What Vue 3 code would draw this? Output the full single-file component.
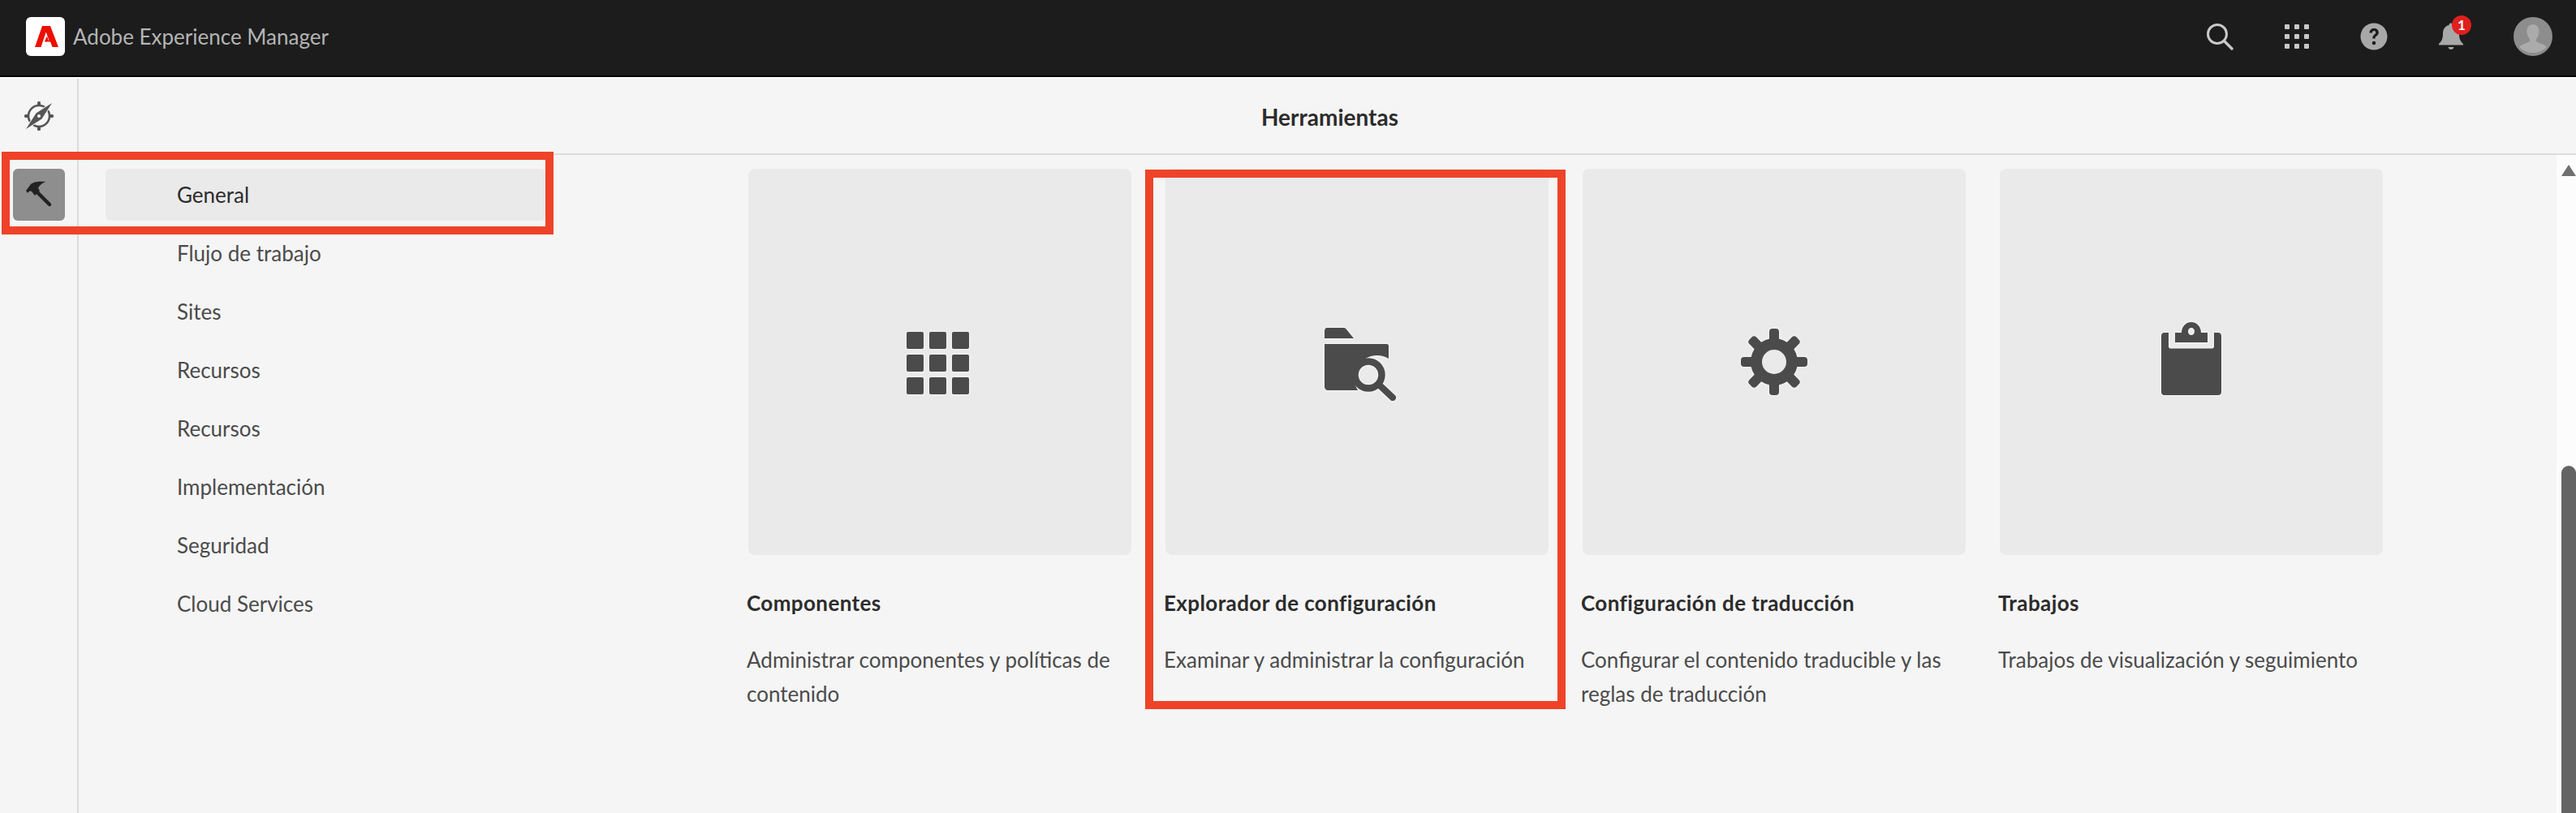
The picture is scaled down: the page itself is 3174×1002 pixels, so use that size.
<script setup>
const navItems = ['General', 'Flujo de trabajo', 'Sites', 'Recursos', 'Recursos', 'Implementación', 'Seguridad', 'Cloud Services']

const cards = [
  { id: 'grid', title: 'Componentes', desc: 'Administrar componentes y políticas de contenido' },
  { id: 'folder', title: 'Explorador de configuración', desc: 'Examinar y administrar la configuración' },
  { id: 'gear', title: 'Configuración de traducción', desc: 'Configurar el contenido traducible y las reglas de traducción' },
  { id: 'clipboard', title: 'Trabajos', desc: 'Trabajos de visualización y seguimiento' }
]

const gridTiles = []
for (let r = 0; r < 3; r++) {
  for (let c = 0; c < 3; c++) gridTiles.push({ x: c * 28, y: r * 28 })
}
const gearTeeth = [0, 45, 90, 135, 180, 225, 270, 315]
const dots = []
for (let r = 0; r < 3; r++) {
  for (let c = 0; c < 3; c++) dots.push({ x: c * 12, y: r * 12 })
}
</script>

<template>
  <div class="page">
    <header class="topbar">
      <div class="brand">
        <svg class="logo" viewBox="0 0 48 48" width="48" height="48">
          <rect width="48" height="48" rx="6" fill="#fff" />
          <path d="M20 11h10l10 26h-7.500l-2.400-6.500h-7.300l3-7 2.200 5.500h.6l-3.900-10.500L18.500 37H11z" fill="#eb1000" />
        </svg>
        <span class="brand-name">Adobe Experience Manager</span>
      </div>
      <div class="actions">
        <svg class="act" viewBox="0 0 34 34" width="34" height="34">
          <circle cx="14" cy="14" r="11.500" fill="none" stroke="#c8c8c8" stroke-width="3" />
          <path d="M22.500 22.500L32 32" stroke="#c8c8c8" stroke-width="3.400" stroke-linecap="round" />
        </svg>
        <svg class="act" viewBox="0 0 32 32" width="32" height="32">
          <rect v-for="(d, i) in dots" :key="i" :x="d.x + 1" :y="d.y + 1" width="6" height="6" rx="1" fill="#c8c8c8" />
        </svg>
        <svg class="act" viewBox="0 0 34 34" width="34" height="34">
          <circle cx="17" cy="17" r="16.500" fill="#a8a8a8" />
          <path d="M11.500 12.500c0-3.500 2.500-5.500 5.700-5.500 3.300 0 5.600 2 5.600 5 0 2.600-1.500 3.700-3 4.800-1 .8-1.200 1.300-1.200 2.700h-3.300c0-2.400.6-3.500 2-4.600 1.300-1 2-1.600 2-2.800 0-1.200-.9-2-2.100-2-1.300 0-2.200.9-2.300 2.400z" fill="#1c1c1c" />
          <circle cx="17" cy="25" r="2.300" fill="#1c1c1c" />
        </svg>
        <div class="bell">
          <svg viewBox="0 0 32 36" width="32" height="36">
            <path d="M16 1.500c1.500 0 2.500 1 2.500 2.500 5 1.200 7.500 5 7.500 10.500 0 6 1.500 9.500 5 12.500v1.500H1V27c3.500-3 5-6.500 5-12.500C6 9 8.500 5.200 13.500 4c0-1.500 1-2.500 2.500-2.500z" fill="#a8a8a8" />
            <path d="M12.500 31h7c-.4 2-1.800 3-3.500 3s-3.100-1-3.500-3z" fill="#a8a8a8" />
          </svg>
          <span class="badge">1</span>
        </div>
        <svg class="avatar" viewBox="0 0 48 48" width="48" height="48">
          <circle cx="24" cy="24" r="24" fill="#8d8d8d" />
          <path d="M24 9c5 0 7.500 4 7.500 8.500 0 4-1.500 7.500-3.500 9.500v3c3 2 10 3.500 13 7a24 24 0 0 1-34 0c3-3.500 10-5 13-7v-3c-2-2-3.500-5.500-3.500-9.500C16.500 13 19 9 24 9z" fill="#ababab" />
        </svg>
      </div>
    </header>

    <div class="shell">
      <aside class="rail">
        <div class="rail-item">
          <svg viewBox="0 0 38 38" width="38" height="38">
            <circle cx="19" cy="19" r="13" fill="none" stroke="#555" stroke-width="2.600" />
            <g fill="#555">
              <rect x="17" y="1" width="4" height="6" rx="1.500" />
              <rect x="17" y="31" width="4" height="6" rx="1.500" />
              <rect x="1" y="17" width="6" height="4" rx="1.500" />
              <rect x="31" y="17" width="6" height="4" rx="1.500" />
            </g>
            <path d="M35 3L22.500 22.500 15.500 15.500zM3 35L15.500 15.500 22.500 22.500z" fill="#555" stroke="#f5f5f5" stroke-width="2" paint-order="stroke" />
            <circle cx="19" cy="19" r="2" fill="#f5f5f5" />
          </svg>
        </div>
        <div class="rail-item rail-item--active">
          <svg viewBox="0 0 34 34" width="34" height="34">
            <path d="M1 12L7 4C10 1 18 0 25 1C20 3 17 6 16 9L18 12L12 18L8 13C6 12 4 13 3 15z" fill="#222" />
            <path d="M15 14L30 29" stroke="#222" stroke-width="4.500" stroke-linecap="round" />
          </svg>
        </div>
      </aside>

      <div class="main">
        <div class="heading">Herramientas</div>
        <div class="body">
          <nav class="nav">
            <a v-for="(item, i) in navItems" :key="i" class="nav-item" :class="{ 'nav-item--active': i === 0 }">{{ item }}</a>
          </nav>
          <section class="cards">
            <article v-for="card in cards" :key="card.id" class="card">
              <div class="tile">
                <svg v-if="card.id === 'grid'" class="tile-icon icon-grid" viewBox="0 0 77 77" width="77" height="77">
                  <rect v-for="(t, i) in gridTiles" :key="i" :x="t.x" :y="t.y" width="21" height="21" rx="2" fill="#4b4b4b" />
                </svg>
                <svg v-else-if="card.id === 'folder'" class="tile-icon icon-folder" viewBox="0 0 90 90" width="90" height="90">
                  <path d="M0 4c0-2 1-4 3-4h20c2 0 3 .5 4 2l9 11H0z" fill="#4b4b4b" />
                  <path d="M0 20h77c1 0 2 1 2 2v16a28 28 0 0 0-38 39H4c-2 0-4-2-4-4z" fill="#4b4b4b" />
                  <circle cx="54" cy="58" r="16.500" fill="none" stroke="#4b4b4b" stroke-width="8.500" />
                  <path d="M67 70l17 16" stroke="#4b4b4b" stroke-width="8" stroke-linecap="round" />
                </svg>
                <svg v-else-if="card.id === 'gear'" class="tile-icon" viewBox="0 0 82 82" width="82" height="82">
                  <rect v-for="a in gearTeeth" :key="a" x="35" y="0" width="12" height="18" rx="4" fill="#4b4b4b" :transform="`rotate(${a} 41 41)`" />
                  <circle cx="41" cy="41" r="29" fill="#4b4b4b" />
                  <circle cx="41" cy="41" r="15" fill="#eaeaea" />
                </svg>
                <svg v-else class="tile-icon icon-clip" viewBox="0 0 74 90" width="74" height="90">
                  <path d="M0 17c0-2.500 1.500-4 4-4h5v17c0 1.500 1 2.500 2.500 2.500h51c1.500 0 2.500-1 2.500-2.500V13h5c2.500 0 4 1.500 4 4v69c0 2.500-1.500 4-4 4H4c-2.500 0-4-1.500-4-4z" fill="#4b4b4b" />
                  <path d="M17 13h8c0-7 5-13 12-13s12 6 12 13h8v12H17zM37 7a4 4.500 0 1 0 0 9 4 4.500 0 1 0 0-9z" fill="#4b4b4b" fill-rule="evenodd" />
                </svg>
              </div>
              <h3 class="card-title">{{ card.title }}</h3>
              <p class="card-desc">{{ card.desc }}</p>
            </article>
          </section>
          <div class="scrollbar">
            <span class="scroll-arrow"></span>
            <span class="scroll-thumb"></span>
          </div>
        </div>
      </div>
    </div>

    <div class="mark mark--nav"></div>
    <div class="mark mark--card"></div>
  </div>
</template>

<style scoped>
.page {
  position: relative;
  display: flex;
  flex-direction: column;
  width: 3174px;
  height: 1002px;
  overflow: hidden;
  background: #f5f5f5;
  font-family: Lato, "Open Sans", sans-serif;
  color: #4b4b4b;
}

.topbar {
  display: flex;
  justify-content: space-between;
  align-items: center;
  flex: none;
  height: 95px;
  padding: 0 29px 3px 32px;
  box-sizing: border-box;
  background: #1c1c1c;
  border-bottom: 2px solid #000;
}

.brand {
  display: flex;
  align-items: center;
  gap: 10px;
}

.logo {
  display: block;
}

.brand-name {
  font-size: 26px;
  color: #b4b4b4;
}

.actions {
  display: flex;
  align-items: center;
  gap: 62px;
}

.act {
  display: block;
}

.bell {
  position: relative;
  width: 32px;
  height: 36px;
  margin-right: -1px;
}

.bell svg {
  display: block;
}

.badge {
  position: absolute;
  top: -8px;
  left: 17px;
  width: 24px;
  height: 24px;
  border-radius: 50%;
  background: #e01f1f;
  color: #fff;
  font-size: 17px;
  font-weight: 700;
  line-height: 24px;
  text-align: center;
}

.avatar {
  display: block;
}

.shell {
  display: flex;
  flex: 1;
  min-height: 0;
  border-top: 2px solid #fff;
}

.rail {
  flex: none;
  width: 97px;
  box-sizing: border-box;
  padding: 0 16px;
  border-right: 2px solid #dcdcdc;
}

.rail-item {
  display: flex;
  align-items: center;
  justify-content: center;
  width: 64px;
  height: 64px;
  margin-top: 14px;
  border-radius: 6px;
}

.rail-item--active {
  margin-top: 33px;
  background: #8e8e8e;
}

.main {
  display: flex;
  flex: 1;
  flex-direction: column;
  min-width: 0;
}

.heading {
  flex: none;
  height: 94px;
  padding: 1px 0 0 6px;
  line-height: 92px;
  box-sizing: border-box;
  border-bottom: 2px solid #dcdcdc;
  text-align: center;
  font-size: 28px;
  font-weight: 700;
  color: #2c2c2c;
}

.body {
  display: flex;
  flex: 1;
  min-height: 0;
}

.nav {
  display: flex;
  flex: none;
  flex-direction: column;
  width: 825px;
  box-sizing: border-box;
  padding: 17px 0 0 33px;
}

.nav-item {
  display: block;
  width: 542px;
  height: 64px;
  margin-bottom: 8px;
  padding-left: 88px;
  box-sizing: border-box;
  border-radius: 6px;
  font-size: 26px;
  line-height: 64px;
  color: #4b4b4b;
}

.nav-item--active {
  background: #eaeaea;
  color: #2c2c2c;
}

.cards {
  display: grid;
  flex: none;
  grid-template-columns: repeat(4, 472px);
  gap: 42px;
  align-content: start;
  padding-top: 17px;
}

.tile {
  display: flex;
  align-items: center;
  justify-content: center;
  height: 476px;
  border-radius: 8px;
  background: #eaeaea;
}

.tile-icon {
  display: block;
  filter: drop-shadow(0 0 1.5px #fff);
}

.icon-grid {
  margin: 3px 5px 0 0;
}

.icon-folder {
  margin: 6px 0 0 10px;
}

.icon-clip {
  margin-top: -9px;
}

.card-title {
  margin: 42px 0 0 -2px;
  font-size: 26px;
  font-weight: 700;
  line-height: 34px;
  letter-spacing: 0.4px;
  color: #2c2c2c;
}

.card-desc {
  margin: 32px 0 0 -2px;
  font-size: 26px;
  line-height: 42px;
  color: #4b4b4b;
}

.scrollbar {
  display: flex;
  flex: none;
  flex-direction: column;
  align-items: flex-end;
  width: 24px;
  margin-left: auto;
  background: #fcfcfc;
}

.scroll-arrow {
  width: 0;
  height: 0;
  margin-top: 12px;
  border-left: 9px solid transparent;
  border-right: 9px solid transparent;
  border-bottom: 14px solid #707070;
}

.scroll-thumb {
  width: 18px;
  height: 440px;
  margin-top: 357px;
  border-radius: 9px 9px 0 0;
  background: #646464;
}

.mark {
  position: absolute;
  box-sizing: border-box;
  border: 10px solid #ee4329;
}

.mark--nav {
  left: 2px;
  top: 187px;
  width: 680px;
  height: 102px;
}

.mark--card {
  left: 1411px;
  top: 209px;
  width: 518px;
  height: 665px;
}
</style>

<style>
html,
body {
  margin: 0;
  background: #f5f5f5;
}
</style>
